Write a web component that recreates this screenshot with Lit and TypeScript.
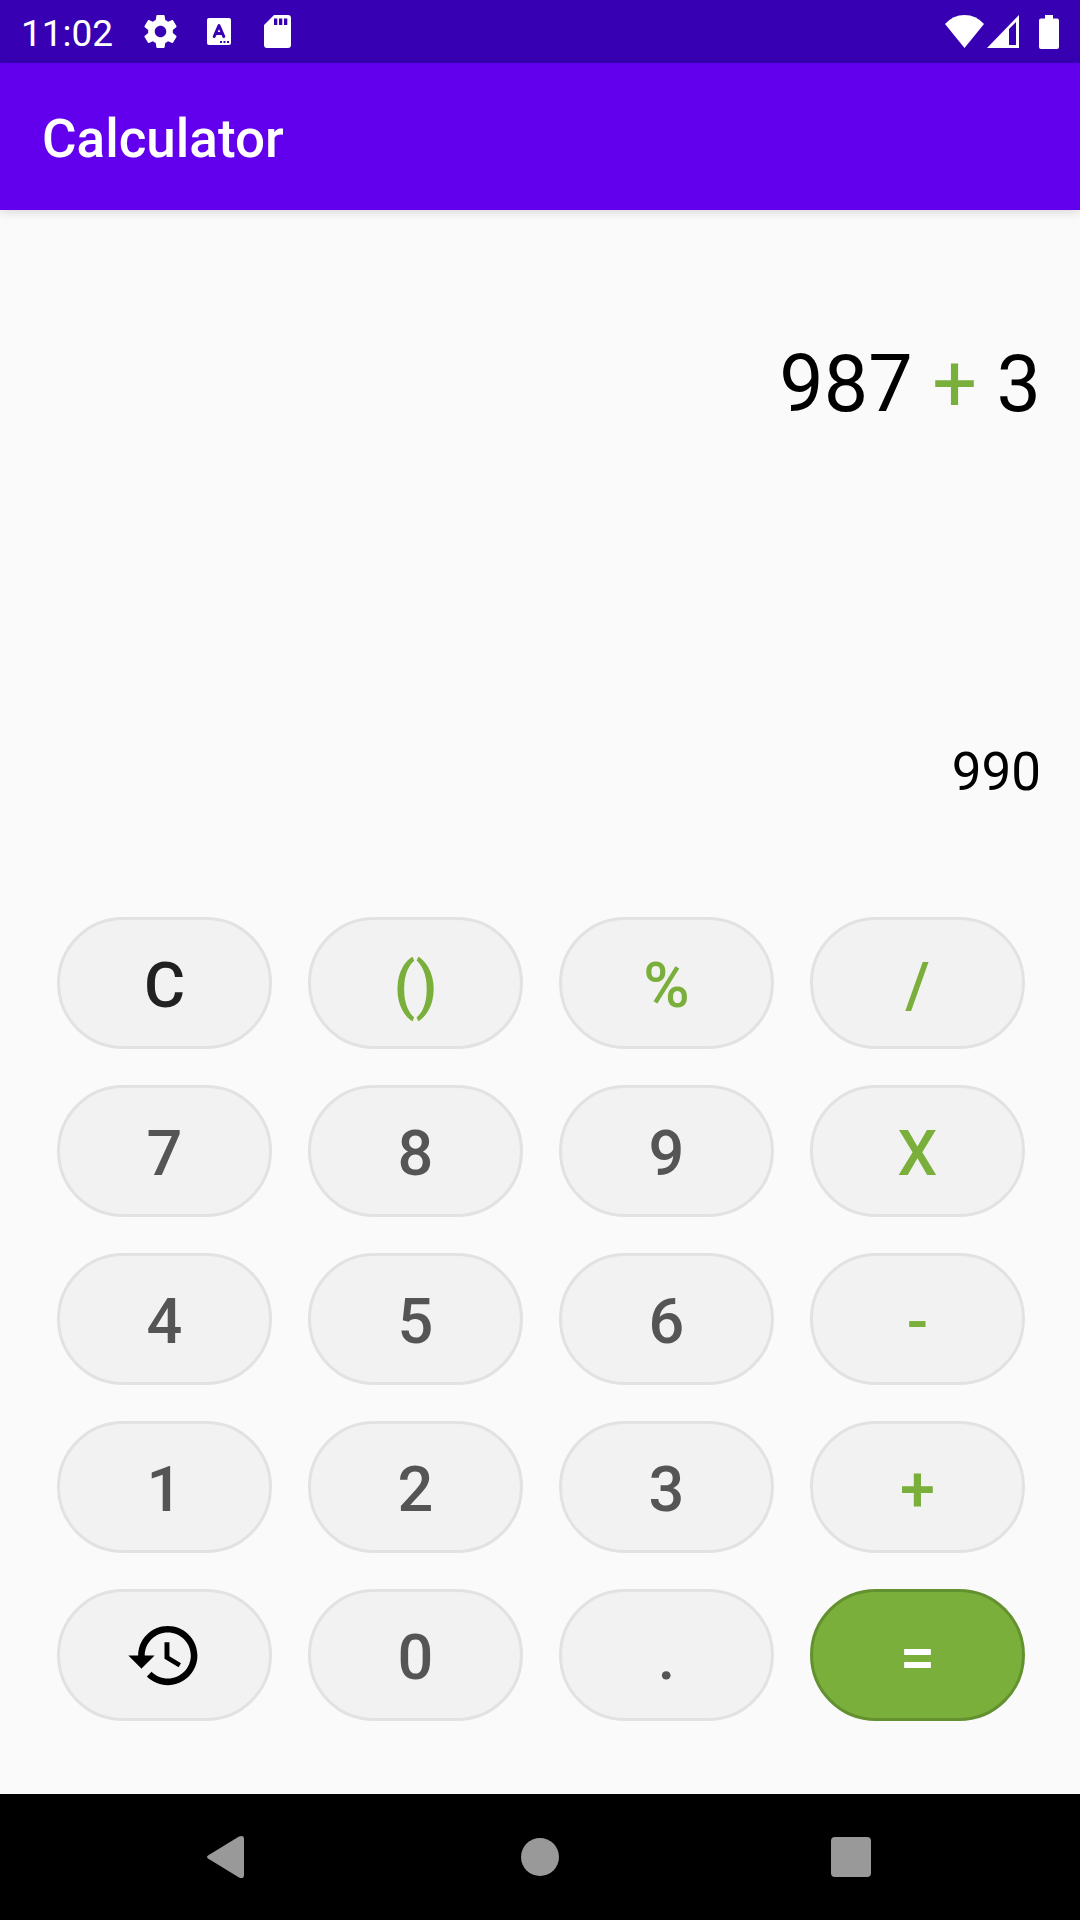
import { LitElement, html, css, svg } from "lit";
import { customElement, state } from "lit/decorators.js";
import { classMap } from "lit/directives/class-map.js";

type Kind = "clear" | "digit" | "operator" | "equals" | "history";

interface Key {
  label: string;
  kind: Kind;
  name?: string;
}

const KEYS: Key[] = [
  { label: "C", kind: "clear", name: "Clear" },
  { label: "()", kind: "operator", name: "Parentheses" },
  { label: "%", kind: "operator", name: "Percent" },
  { label: "/", kind: "operator", name: "Divide" },
  { label: "7", kind: "digit" },
  { label: "8", kind: "digit" },
  { label: "9", kind: "digit" },
  { label: "X", kind: "operator", name: "Multiply" },
  { label: "4", kind: "digit" },
  { label: "5", kind: "digit" },
  { label: "6", kind: "digit" },
  { label: "-", kind: "operator", name: "Subtract" },
  { label: "1", kind: "digit" },
  { label: "2", kind: "digit" },
  { label: "3", kind: "digit" },
  { label: "+", kind: "operator", name: "Add" },
  { label: "", kind: "history", name: "History" },
  { label: "0", kind: "digit" },
  { label: ".", kind: "digit", name: "Decimal point" },
  { label: "=", kind: "equals", name: "Equals" },
];

const isOperator = (t: string) => "+-X/%".includes(t);

/** Evaluates the tokens from left to right. */
function evaluate(tokens: string[]): string {
  if (!tokens.length) return "";
  let total = Number(tokens[0]);
  for (let i = 1; i + 1 < tokens.length; i += 2) {
    const n = Number(tokens[i + 1]);
    if (tokens[i] === "+") total += n;
    else if (tokens[i] === "-") total -= n;
    else if (tokens[i] === "X") total *= n;
    else if (tokens[i] === "/") total /= n;
    else total %= n;
  }
  return String(total);
}

@customElement("status-bar")
export class StatusBar extends LitElement {
  static styles = css`
    :host {
      display: flex;
      align-items: center;
      justify-content: space-between;
      box-sizing: border-box;
      height: 63px;
      padding: 0 21px;
      background: #3700b3;
      color: #fff;
    }
    .group {
      display: flex;
      align-items: center;
    }
    .time {
      font-size: 37px;
      line-height: 44px;
      padding-top: 4px;
      margin-right: 31px;
    }
    .icon {
      display: block;
      fill: currentColor;
    }
    .gear {
      margin-right: 30px;
    }
    .keyboard {
      margin-right: 33px;
    }
    .signal {
      margin: 0 20px 0 3px;
    }
  `;

  render() {
    return html`
      <div class="group">
        <span class="time">11:02</span>
        <svg class="icon gear" width="33" height="33" viewBox="2 2 20 20" aria-hidden="true">
          <path d="M19.43 12.98c.04-.32.07-.64.07-.98s-.03-.66-.07-.98l2.11-1.65c.19-.15.24-.42.12-.64l-2-3.46c-.12-.22-.39-.3-.61-.22l-2.49 1c-.52-.4-1.08-.73-1.69-.98l-.38-2.65C14.46 2.18 14.25 2 14 2h-4c-.25 0-.46.18-.49.42l-.38 2.65c-.61.25-1.17.59-1.69.98l-2.49-1c-.23-.09-.49 0-.61.22l-2 3.46c-.13.22-.07.49.12.64l2.11 1.65c-.04.32-.07.65-.07.98s.03.66.07.98l-2.11 1.65c-.19.15-.24.42-.12.64l2 3.46c.12.22.39.3.61.22l2.49-1c.52.4 1.08.73 1.69.98l.38 2.65c.03.24.24.42.49.42h4c.25 0 .46-.18.49-.42l.38-2.65c.61-.25 1.17-.59 1.69-.98l2.49 1c.23.09.49 0 .61-.22l2-3.46c.12-.22.07-.49-.12-.64l-2.11-1.65zM12 15.5c-1.93 0-3.5-1.57-3.5-3.5s1.57-3.5 3.5-3.5 3.5 1.57 3.5 3.5-1.57 3.5-3.5 3.5z"/>
        </svg>
        <svg class="icon keyboard" width="24" height="27" viewBox="0 0 24 27" aria-hidden="true">
          <rect width="24" height="27" rx="2"/>
          <path d="M7.2 18.5L12 7.5L16.8 18.5M8.8 15.5H15.2" fill="none" stroke="#3700b3" stroke-width="3" stroke-linecap="round" stroke-linejoin="round"/>
          <path d="M13 23h2v2h-2zM16.5 23h2v2h-2zM20 23h2v2h-2z" fill="#3700b3"/>
        </svg>
        <svg class="icon" width="27" height="33" viewBox="0 0 27 33" aria-hidden="true">
          <path fill-rule="evenodd" d="M10 0H24Q27 0 27 3V30Q27 33 24 33H3Q0 33 0 30V10ZM10 3.5V10H13.3V3.5ZM15 3.5V10H18.3V3.5ZM20 3.5V10H23.3V3.5Z"/>
        </svg>
      </div>
      <div class="group">
        <svg class="icon" width="39" height="33" viewBox="0 0 39 33" aria-hidden="true">
          <path d="M19.500 33L0 9Q8 0 19.500 0T39 9Z"/>
        </svg>
        <svg class="icon signal" width="32" height="33" viewBox="0 0 32 33" aria-hidden="true">
          <path fill-rule="evenodd" d="M0 33L32 0V33ZM22 14V30H29V7Z"/>
        </svg>
        <svg class="icon" width="20" height="34" viewBox="0 0 20 34" aria-hidden="true">
          <path d="M6 0H14V3.500H18Q20 3.500 20 5.500V32Q20 34 18 34H2Q0 34 0 32V5.500Q0 3.500 2 3.500H6Z"/>
        </svg>
      </div>
    `;
  }
}

@customElement("nav-bar")
export class NavBar extends LitElement {
  static styles = css`
    :host {
      display: grid;
      grid-template-columns: repeat(3, 1fr);
      height: 126px;
      padding: 0 72px;
      background: #000;
    }
    .button {
      display: grid;
      place-items: center;
      padding: 0;
      border: 0;
      background: none;
      color: #999;
    }
    .icon {
      display: block;
      fill: currentColor;
    }
  `;

  private button(name: string, shape: unknown) {
    return html`
      <button class="button" aria-label=${name}>
        <svg class="icon" width="48" height="48" viewBox="0 0 48 48" aria-hidden="true">${shape}</svg>
      </button>
    `;
  }

  render() {
    return html`
      ${this.button("Back", svg`<path d="M4 22.500L35 3.500Q40 1.500 40 6V42Q40 46.500 35 44.500L4 25.500Q2 24 4 22.500Z"/>`)}
      ${this.button("Home", svg`<circle cx="24" cy="24" r="19"/>`)}
      ${this.button("Overview", svg`<rect x="3" y="4" width="40" height="40" rx="4"/>`)}
    `;
  }
}

@customElement("app-root")
export class AppRoot extends LitElement {
  static styles = css`
    :host {
      display: flex;
      flex-direction: column;
      min-height: 100vh;
      background: #fafafa;
      color: #000;
      font-family: Roboto, "Liberation Sans", sans-serif;
    }
    .app-bar {
      display: flex;
      align-items: center;
      height: 147px;
      padding: 0 42px;
      background: #6200ee;
      color: #fff;
      box-shadow: 0 2px 10px rgba(0, 0, 0, 0.14);
    }
    .title {
      margin: 0;
      padding-top: 4px;
      font-size: 53px;
      line-height: 62px;
      font-weight: 500;
    }
    .main {
      flex: 1;
      display: flex;
      flex-direction: column;
    }
    .display {
      flex: 1;
      display: flex;
      flex-direction: column;
      justify-content: space-between;
      padding: 128px 39px 114px;
      text-align: right;
    }
    .expression {
      font-size: 79px;
      line-height: 92px;
      min-height: 92px;
    }
    .result {
      font-size: 53px;
      line-height: 62px;
      min-height: 62px;
    }
    .accent {
      color: #7baf3b;
    }
    .keypad {
      display: grid;
      grid-template-columns: repeat(4, 1fr);
      gap: 36px;
      padding: 0 55px 73px 57px;
    }
    .key {
      display: flex;
      align-items: center;
      justify-content: center;
      box-sizing: border-box;
      height: 132px;
      padding: 5px 0 0;
      border: 3px solid #e2e2e2;
      border-radius: 66px;
      background: #f2f2f2;
      color: #555;
      font-family: inherit;
      font-size: 63px;
      line-height: 74px;
      font-weight: 500;
    }
    .clear {
      color: #212121;
    }
    .operator {
      color: #7baf3b;
    }
    .equals {
      border-color: #639130;
      background: #7baf3b;
      color: #fff;
    }
    .history {
      padding: 0;
      color: #000;
    }
    .history-icon {
      display: block;
      fill: currentColor;
    }
  `;

  @state() private tokens: string[] = ["987", "+", "3"];

  private press(key: Key) {
    const tokens = [...this.tokens];
    const last = tokens[tokens.length - 1];
    if (key.kind === "clear") {
      this.tokens = [];
    } else if (key.kind === "equals") {
      this.tokens = tokens.length ? [evaluate(tokens)] : [];
    } else if (key.kind === "digit") {
      if (last === undefined || isOperator(last)) tokens.push(key.label);
      else tokens[tokens.length - 1] = last + key.label;
      this.tokens = tokens;
    } else if (isOperator(key.label) && last !== undefined && key.label) {
      if (isOperator(last)) tokens[tokens.length - 1] = key.label;
      else tokens.push(key.label);
      this.tokens = tokens;
    }
  }

  private renderKey(key: Key) {
    return html`
      <button
        class=${classMap({ key: true, [key.kind]: true })}
        aria-label=${key.name ?? key.label}
        @click=${() => this.press(key)}
      >${key.kind === "history"
        ? html`<svg class="history-icon" width="79" height="79" viewBox="0 0 24 24" aria-hidden="true">
            <path d="M13 3c-4.970 0-9 4.030-9 9H1l3.890 3.890.070.140L9 12H6c0-3.870 3.130-7 7-7s7 3.130 7 7-3.130 7-7 7c-1.930 0-3.680-.790-4.940-2.060l-1.420 1.420C8.270 19.990 10.510 21 13 21c4.970 0 9-4.030 9-9s-4.030-9-9-9zm-1 5v5l4.280 2.540.720-1.210-3.500-2.080V8H12z"/>
          </svg>`
        : key.label}</button>
    `;
  }

  render() {
    return html`
      <status-bar></status-bar>
      <header class="app-bar"><h1 class="title">Calculator</h1></header>
      <main class="main">
        <section class="display" aria-label="Display">
          <div class="expression">
            ${this.tokens.map((t, i) => html`${i ? " " : ""}<span class=${classMap({ accent: isOperator(t) })}>${t}</span>`)}
          </div>
          <output class="result">${evaluate(this.tokens)}</output>
        </section>
        <section class="keypad" aria-label="Keypad">${KEYS.map((k) => this.renderKey(k))}</section>
      </main>
      <nav-bar></nav-bar>
    `;
  }
}
